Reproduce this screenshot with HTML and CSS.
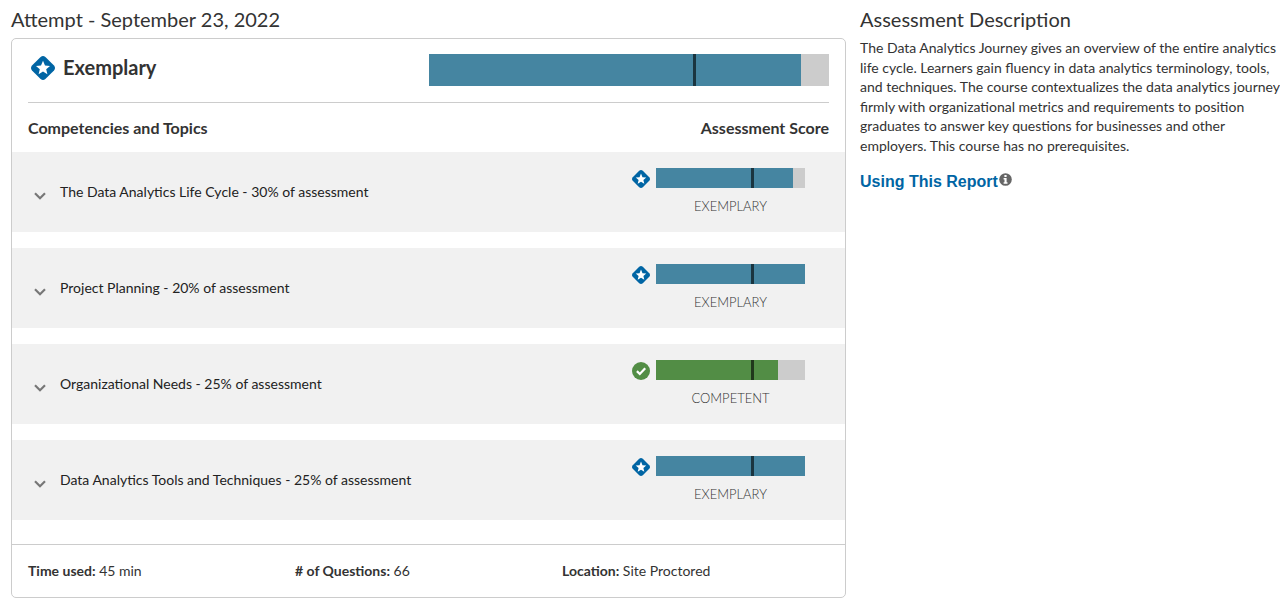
FILE: index.html
```html
<!DOCTYPE html>
<html lang="en">
<head>
<meta charset="utf-8">
<title>Assessment Report</title>
<link rel="stylesheet" href="styles.css">
</head>
<body>
<svg class="sprite" aria-hidden="true">
  <symbol id="exemplary" viewBox="0 0 24 24">
    <path fill="#0065a4" d="M9.600 1 Q12-1 14.400 1 L23 9.600 Q25 12 23 14.400 L14.400 23 Q12 25 9.600 23 L1 14.400 Q-1 12 1 9.600 Z"/>
    <path fill="#fff" d="M12 4.800 L14 9.600 L19 10 L15.200 13.300 L16.400 18.300 L12 15.600 L7.600 18.300 L8.800 13.300 L5 10 L10 9.600 Z"/>
  </symbol>
  <symbol id="competent" viewBox="0 0 18 18">
    <circle cx="9" cy="9" r="9" fill="#528d45"/>
    <path d="M4.900 9.100 L7.800 12 L13.200 6.200" fill="none" stroke="#fff" stroke-width="2.200"/>
  </symbol>
  <symbol id="chevron" viewBox="0 0 12 8">
    <path d="M1 1.300 L6 6.300 L11 1.300" fill="none" stroke="#777" stroke-width="2.200"/>
  </symbol>
</svg>
<div class="page">
  <main class="report">
    <h1 class="heading">Attempt - September 23, 2022</h1>
    <section class="card">
      <header class="summary">
        <h2 class="level"><svg class="level-icon" aria-hidden="true"><use href="#exemplary"/></svg>Exemplary</h2>
        <div class="bar bar-large"><div class="fill" style="width:93%"></div><div class="cut"></div></div>
      </header>
      <div class="columns"><h3 class="column">Competencies and Topics</h3><h3 class="column">Assessment Score</h3></div>
      <ul class="topics">
        <li class="topic">
          <button class="toggle" type="button" aria-expanded="false"><svg class="chevron" aria-hidden="true"><use href="#chevron"/></svg><span>The Data Analytics Life Cycle - 30% of assessment</span></button>
          <div class="score"><svg class="score-icon" aria-hidden="true"><use href="#exemplary"/></svg><div class="bar"><div class="fill" style="width:92%"></div><div class="cut"></div></div><p class="score-label">EXEMPLARY</p></div>
        </li>
        <li class="topic">
          <button class="toggle" type="button" aria-expanded="false"><svg class="chevron" aria-hidden="true"><use href="#chevron"/></svg><span>Project Planning - 20% of assessment</span></button>
          <div class="score"><svg class="score-icon" aria-hidden="true"><use href="#exemplary"/></svg><div class="bar"><div class="fill" style="width:100%"></div><div class="cut"></div></div><p class="score-label">EXEMPLARY</p></div>
        </li>
        <li class="topic">
          <button class="toggle" type="button" aria-expanded="false"><svg class="chevron" aria-hidden="true"><use href="#chevron"/></svg><span>Organizational Needs - 25% of assessment</span></button>
          <div class="score"><svg class="score-icon" aria-hidden="true"><use href="#competent"/></svg><div class="bar"><div class="fill fill-competent" style="width:82%"></div><div class="cut cut-competent"></div></div><p class="score-label">COMPETENT</p></div>
        </li>
        <li class="topic">
          <button class="toggle" type="button" aria-expanded="false"><svg class="chevron" aria-hidden="true"><use href="#chevron"/></svg><span>Data Analytics Tools and Techniques - 25% of assessment</span></button>
          <div class="score"><svg class="score-icon" aria-hidden="true"><use href="#exemplary"/></svg><div class="bar"><div class="fill" style="width:100%"></div><div class="cut"></div></div><p class="score-label">EXEMPLARY</p></div>
        </li>
      </ul>
      <footer class="facts">
        <p class="fact"><b class="term">Time used:</b> 45 min</p>
        <p class="fact"><b class="term"># of Questions:</b> 66</p>
        <p class="fact"><b class="term">Location:</b> Site Proctored</p>
      </footer>
    </section>
  </main>
  <aside class="about">
    <h2 class="heading">Assessment Description</h2>
    <p class="description">The Data Analytics Journey gives an overview of the entire analytics life cycle. Learners gain fluency in data analytics terminology, tools, and techniques. The course contextualizes the data analytics journey firmly with organizational metrics and requirements to position graduates to answer key questions for businesses and other employers. This course has no prerequisites.</p>
    <a class="guide" href="#">Using This Report<svg class="info" viewBox="0 0 13 13" aria-hidden="true"><circle cx="6.500" cy="6.500" r="6.300" fill="#666"/><path fill="#fff" d="M5.400 2h2.200v2H5.400zM4.600 5h3v4.300h.9v1.500H4.600V9.300h.9V6.500h-.9z"/></svg></a>
  </aside>
</div>
</body>
</html>
```
FILE: styles.css
```css
* { box-sizing: border-box; }
body {
  margin: 0;
  background: #fff;
  color: #333;
  font: 14px/1.4 Lato, "Liberation Sans", sans-serif;
  overflow-x: hidden;
}
h1, h2, h3, p, ul { margin: 0; padding: 0; }
.sprite { display: none; }
.page {
  display: grid;
  grid-template-columns: 835fr 420fr;
  gap: 14px;
  padding: 7px 0 8px 11px;
}
.heading {
  font-size: 20px;
  line-height: 24px;
  font-weight: 400;
}
.report .heading { margin-bottom: 7px; }
.card {
  border: 1px solid #ccc;
  border-radius: 5px;
}
.summary {
  display: grid;
  grid-template-columns: 1fr 1fr;
  align-items: start;
  margin: 0 16px;
  padding: 15px 0 16px;
  border-bottom: 1px solid #ccc;
}
.level {
  display: flex;
  align-items: center;
  gap: 8px;
  padding: 0 3px;
  font-size: 20px;
  line-height: 26px;
  font-weight: 700;
}
.level-icon { width: 24px; height: 24px; margin-top: 2px; }
.bar {
  position: relative;
  height: 20px;
  background: #ccc;
}
.bar-large { height: 32px; }
.fill { height: 100%; background: #4585a1; }
.fill-competent { background: #528d45; }
.cut {
  position: absolute;
  top: 0;
  left: 64%;
  width: 3px;
  height: 100%;
  background: #1a3540;
}
.bar-large .cut { left: 66%; }
.cut-competent { background: #20381b; }
.columns {
  display: flex;
  justify-content: space-between;
  padding: 13px 16px;
}
.column {
  font-size: 16px;
  line-height: 23px;
  font-weight: 700;
}
.topics {
  display: flex;
  flex-direction: column;
  gap: 16px;
  padding-bottom: 24px;
  list-style: none;
}
.topic {
  display: flex;
  justify-content: space-between;
  padding: 0 40px 0 16px;
  background: #f1f1f1;
}
.toggle {
  display: flex;
  flex: 1;
  align-items: center;
  gap: 14px;
  padding: 0 6px;
  border: 0;
  background: none;
  color: #222;
  font: inherit;
  text-align: left;
  cursor: pointer;
}
.chevron { width: 12px; height: 8px; margin-top: 8px; }
.score {
  display: grid;
  grid-template-columns: 18px 149px;
  column-gap: 6px;
  row-gap: 9px;
  align-items: center;
  padding: 16px 0;
}
.score-icon { width: 18px; height: 18px; margin-top: 2px; }
.score-label {
  grid-column: 2;
  font-size: 13px;
  line-height: 19px;
  font-weight: 300;
  text-align: center;
}
.facts {
  display: grid;
  grid-template-columns: repeat(3, 1fr);
  padding: 16px;
  border-top: 1px solid #ccc;
}
.fact { line-height: 20px; }
.term { font-weight: 700; }
.description { margin: 7px -4px 16px 0; }
.guide {
  display: inline-flex;
  align-items: center;
  gap: 1px;
  color: #0065a4;
  font: 700 16px/20px "Liberation Sans", Arial, sans-serif;
  text-decoration: none;
}
.info { width: 13px; height: 13px; margin-bottom: 4px; }
```
